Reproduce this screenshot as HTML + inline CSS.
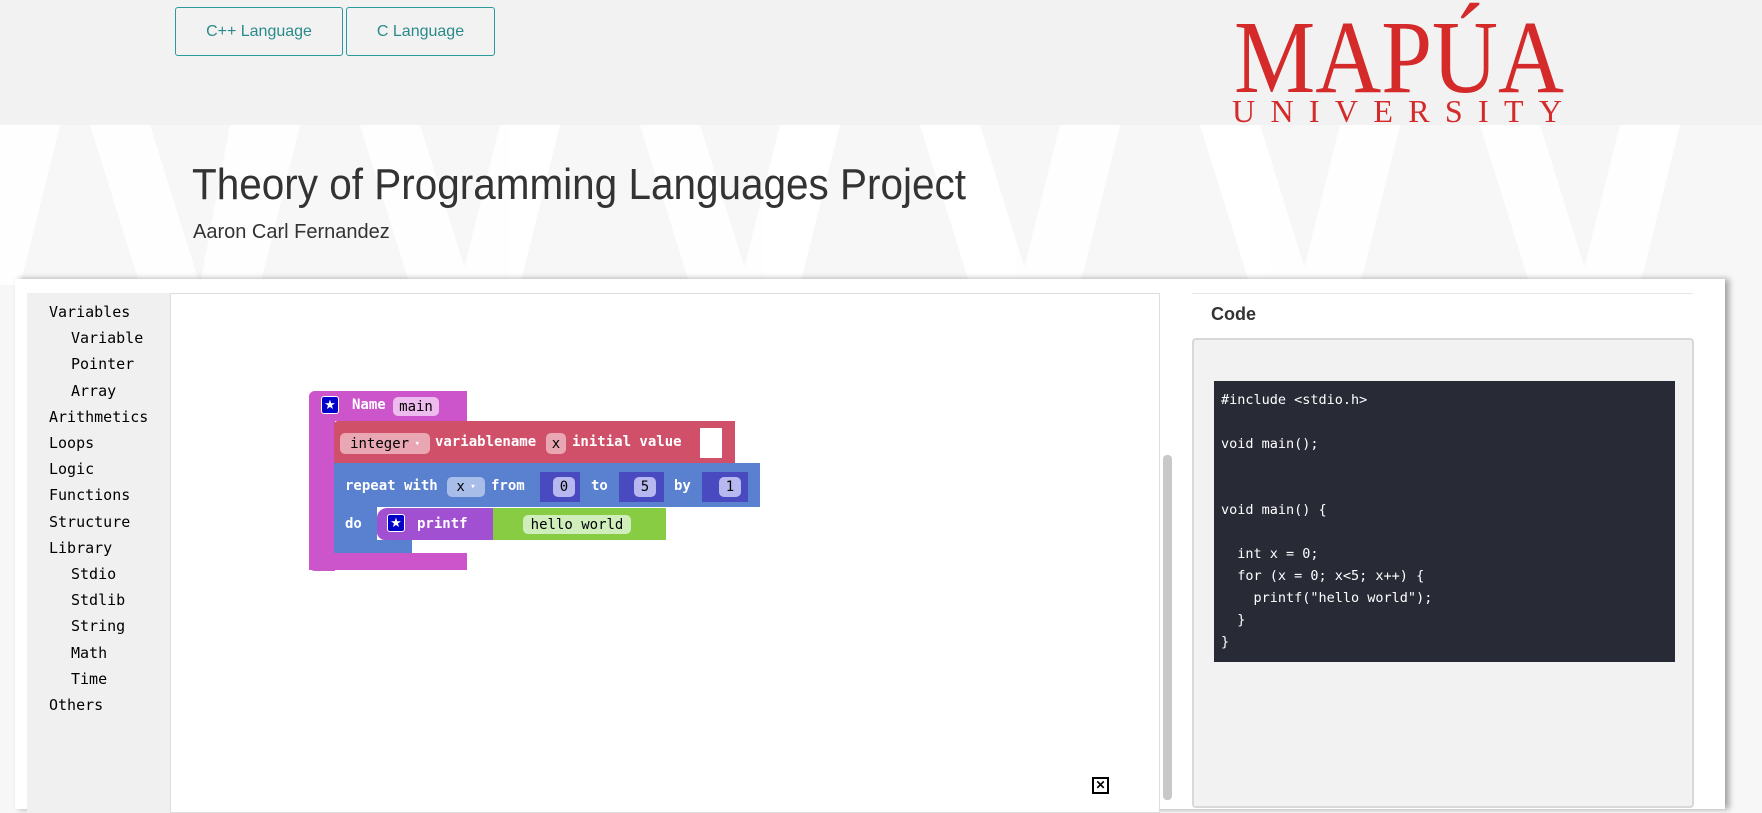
<!DOCTYPE html>
<html><head><meta charset="utf-8"><style>
*{margin:0;padding:0;box-sizing:border-box}
body{width:1762px;height:802px;overflow:hidden;background:#f7f7f7;font-family:"Liberation Sans",sans-serif;position:relative}
.abs{position:absolute}
.btn{position:absolute;top:7px;height:49px;border:1px solid #2a9a9a;border-radius:3px;color:#2a8a8a;font-size:16px;display:flex;align-items:center;justify-content:center;background:transparent}
.tb{position:absolute;font-family:"DejaVu Sans Mono",monospace;font-size:15px;color:#000}
.blk{position:absolute}
.bt{position:absolute;color:#fff;font-family:"DejaVu Sans Mono",monospace;font-size:14px;font-weight:bold;white-space:nowrap}
.fld{position:absolute;border-radius:5px;font-family:"DejaVu Sans Mono",monospace;font-size:14px;display:flex;align-items:center;justify-content:center;color:#000}
.star{position:absolute;width:18px;height:18px;background:#0000c8;border:1px solid #fff;border-radius:3px;color:#fff;font-size:13px;display:flex;align-items:center;justify-content:center}
.code{font-family:"DejaVu Sans Mono",monospace;font-size:13.5px;color:#fff;line-height:22px;white-space:pre}
</style></head><body>
<div class="abs" style="left:0;top:0;width:1762px;height:125px;background:#f2f2f2"></div>
<svg class="abs" style="left:0;top:125px" width="1762" height="160">
<g fill="#ffffff" opacity="0.9">
<polygon points="0,0 60,0 20,160 0,160"/>
<polygon points="90,0 150,0 200,160 140,160"/>
<polygon points="230,0 300,0 260,160 200,160"/>
<polygon points="360,0 420,0 470,160 410,160"/>
<polygon points="500,0 560,0 520,160 460,160"/>
<polygon points="640,0 700,0 750,160 690,160"/>
<polygon points="780,0 840,0 800,160 740,160"/>
<polygon points="920,0 980,0 1030,160 970,160"/>
<polygon points="1060,0 1120,0 1080,160 1020,160"/>
<polygon points="1200,0 1260,0 1310,160 1250,160"/>
<polygon points="1340,0 1400,0 1360,160 1300,160"/>
<polygon points="1480,0 1540,0 1590,160 1530,160"/>
<polygon points="1620,0 1680,0 1640,160 1580,160"/>
</g></svg>
<div class="btn" style="left:175px;width:168px">C++ Language</div>
<div class="btn" style="left:346px;width:149px">C Language</div>
<svg class="abs" style="left:0;top:0" width="1762" height="130">
<text x="1234" y="92" font-family="Liberation Serif,serif" font-size="104" fill="#d42a2a" textLength="330" lengthAdjust="spacingAndGlyphs">MAPÚA</text>
<text x="1232" y="122" font-family="Liberation Serif,serif" font-size="32" fill="#d42a2a" textLength="330" lengthAdjust="spacing">UNIVERSITY</text>
</svg>
<div class="abs" style="left:192px;top:160px;font-size:44px;color:#333;transform:scaleX(0.92);transform-origin:left top;white-space:nowrap">Theory of Programming Languages Project</div>
<div class="abs" style="left:193px;top:221px;font-size:20px;color:#333">Aaron Carl Fernandez</div>

<div class="abs" style="left:15px;top:279px;width:1710px;height:530px;background:#fff;box-shadow:4px 0 6px rgba(0,0,0,.35)"></div>
<div class="abs" style="left:27px;top:293px;width:143px;height:520px;background:#f0f0f0"></div>
<div class="abs" style="left:170px;top:293px;width:990px;height:520px;border:1px solid #ddd;background:#fff"></div>
<div class="abs" style="left:1163px;top:455px;width:9px;height:345px;background:#c8c8c8;border-radius:4px"></div>
<div class="tb" style="left:49px;top:299px;line-height:26.2px">Variables<br><span style="padding-left:22px">Variable</span><br><span style="padding-left:22px">Pointer</span><br><span style="padding-left:22px">Array</span><br>Arithmetics<br>Loops<br>Logic<br>Functions<br>Structure<br>Library<br><span style="padding-left:22px">Stdio</span><br><span style="padding-left:22px">Stdlib</span><br><span style="padding-left:22px">String</span><br><span style="padding-left:22px">Math</span><br><span style="padding-left:22px">Time</span><br>Others</div>

<!-- blocks -->
<div class="blk" style="left:309px;top:391px;width:158px;height:30px;background:#cc55cc;border-radius:6px 0 0 0"></div>
<div class="blk" style="left:309px;top:391px;width:26px;height:180px;background:#cc55cc;border-radius:6px 0 0 6px"></div>
<div class="blk" style="left:309px;top:553px;width:158px;height:17px;background:#cc55cc"></div>
<div class="star" style="left:321px;top:396px">★</div>
<div class="bt" style="left:352px;top:397px">Name</div>
<div class="fld" style="left:393px;top:397px;width:46px;height:19px;background:#eebbee">main</div>

<div class="blk" style="left:334px;top:421px;width:401px;height:43px;background:#d0506a;border-radius:4px 0 0 0"></div>
<div class="fld" style="left:340px;top:433px;width:90px;height:21px;background:#e8a7b2">integer <span style="color:#fff;font-size:9px">&nbsp;▾</span></div>
<div class="bt" style="left:435px;top:434px">variablename</div>
<div class="fld" style="left:546px;top:433px;width:20px;height:21px;background:#e8a7b2">x</div>
<div class="bt" style="left:572px;top:434px">initial value</div>
<div class="blk" style="left:700px;top:428px;width:22px;height:30px;background:#fff"></div>

<div class="blk" style="left:334px;top:463px;width:426px;height:44px;background:#5a80d0"></div>
<div class="blk" style="left:334px;top:463px;width:43px;height:90px;background:#5a80d0"></div>
<div class="blk" style="left:334px;top:540px;width:78px;height:13px;background:#5a80d0"></div>
<div class="bt" style="left:345px;top:478px">repeat with</div>
<div class="fld" style="left:447px;top:477px;width:38px;height:20px;background:#a8bde8">x <span style="color:#fff;font-size:9px">&nbsp;▾</span></div>
<div class="bt" style="left:491px;top:478px">from</div>
<div class="blk" style="left:540px;top:472px;width:40px;height:30px;background:#4a4ac0"></div>
<div class="fld" style="left:553px;top:477px;width:22px;height:20px;background:#b8b8f0">0</div>
<div class="bt" style="left:591px;top:478px">to</div>
<div class="blk" style="left:619px;top:472px;width:45px;height:30px;background:#4a4ac0"></div>
<div class="fld" style="left:634px;top:477px;width:22px;height:20px;background:#b8b8f0">5</div>
<div class="bt" style="left:674px;top:478px">by</div>
<div class="blk" style="left:702px;top:472px;width:46px;height:30px;background:#4a4ac0"></div>
<div class="fld" style="left:719px;top:477px;width:22px;height:20px;background:#b8b8f0">1</div>
<div class="bt" style="left:345px;top:516px">do</div>
<div class="blk" style="left:377px;top:508px;width:116px;height:32px;background:#a050d0;border-radius:10px 0 0 8px"></div>
<div class="star" style="left:387px;top:514px">★</div>
<div class="bt" style="left:417px;top:516px">printf</div>
<div class="blk" style="left:493px;top:508px;width:173px;height:32px;background:#88cc44"></div>
<div class="fld" style="left:523px;top:515px;width:108px;height:19px;background:#d0eebb">hello world</div>

<div class="abs" style="left:1092px;top:777px;width:17px;height:17px;border:2px solid #000;background:#fff;font-size:12px;line-height:12px;text-align:center;font-weight:bold">✕</div>

<!-- code panel -->
<div class="abs" style="left:1192px;top:293px;width:501px;height:1px;background:#e8e8e8"></div>
<div class="abs" style="left:1211px;top:304px;font-size:18px;font-weight:bold;color:#333">Code</div>
<div class="abs" style="left:1192px;top:338px;width:502px;height:470px;background:#f2f2f2;border:2px solid #d8d8d8;border-radius:4px"></div>
<div class="abs code" style="left:1214px;top:381px;width:461px;height:281px;background:#282a36;padding:8px 7px">#include &lt;stdio.h&gt;

void main();


void main() {

  int x = 0;
  for (x = 0; x&lt;5; x++) {
    printf("hello world");
  }
}</div>
</body></html>
